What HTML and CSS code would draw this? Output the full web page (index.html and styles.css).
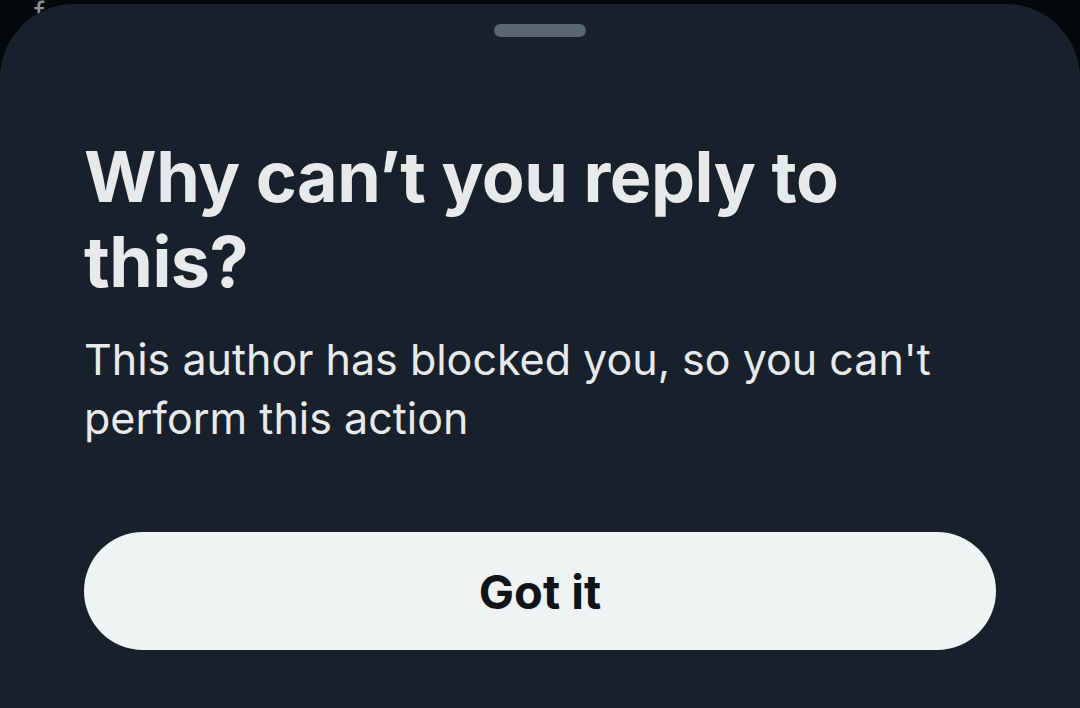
FILE: index.html
```html
<!DOCTYPE html>
<html>
<head>
<meta charset="utf-8">
<link rel="stylesheet" href="styles.css">
</head>
<body>
<div class="backdrop">
  <span class="peek">f</span>
  <div class="sheet">
    <div class="handle"></div>
    <div class="content">
      <h1 class="title">Why can’t you reply to this?</h1>
      <p class="desc">This author has blocked you, so you can't perform this action</p>
      <button class="btn">Got it</button>
    </div>
  </div>
</div>
</body>
</html>
```
FILE: styles.css
```css
html, body {
  margin: 0;
  padding: 0;
  background: #05080b;
  width: 1080px;
  height: 708px;
  overflow: hidden;
}
.backdrop {
  position: relative;
  height: 708px;
  display: flex;
  flex-direction: column;
}
.peek {
  position: absolute;
  left: 34px;
  top: -2px;
  font-family: "Inter", sans-serif;
  font-size: 30px;
  line-height: 30px;
  color: #8b9297;
}
.sheet {
  position: relative;
  margin-top: 4px;
  flex: 1;
  background: #18212b;
  border-radius: 74px 74px 0 0;
  display: flex;
  flex-direction: column;
  align-items: center;
}
.handle {
  margin-top: 20px;
  width: 92px;
  height: 13px;
  border-radius: 7px;
  background: #5b6770;
}
.content {
  align-self: stretch;
  padding: 0 84px 0 84px;
  display: flex;
  flex-direction: column;
}
.title {
  margin: 97px 0 0 0;
  font-family: "Inter", sans-serif;
  font-weight: 700;
  font-size: 70px;
  line-height: 85px;
  letter-spacing: -0.5px;
  color: #e7e9ea;
  width: 800px;
}
.desc {
  margin: 26px 0 0 0;
  font-family: "Inter", sans-serif;
  font-weight: 400;
  font-size: 43px;
  line-height: 59px;
  color: #e7e9ea;
}
.btn {
  margin: 84px 0 0 0;
  height: 118px;
  width: 912px;
  border: none;
  border-radius: 59px;
  background: #eff3f4;
  color: #0f1419;
  font-family: "Inter", sans-serif;
  font-weight: 700;
  font-size: 47px;
  cursor: pointer;
}
```
